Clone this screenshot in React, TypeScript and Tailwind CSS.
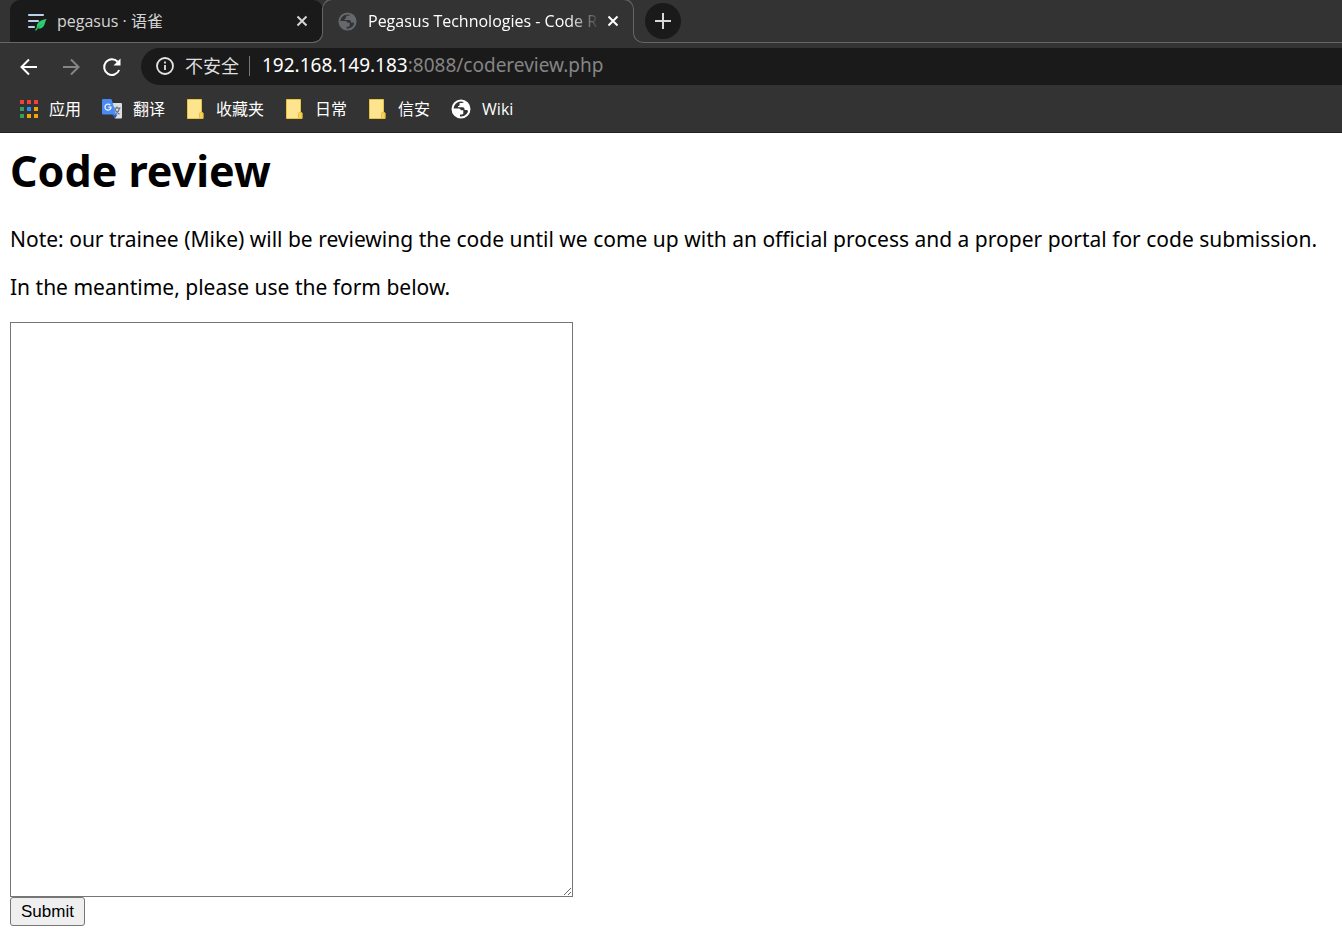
import type { ReactNode } from "react";

const uiFont = "font-['Open_Sans','Noto_Sans_CJK_SC',sans-serif]";

function GlobeIcon({ className }: { className: string }) {
  return (
    <svg viewBox="0 0 20 20" className={className} aria-hidden="true">
      <circle cx="10" cy="10" r="8.500" fill="none" stroke="currentColor" strokeWidth="2" />
      <path
        d="M1.500 9.500h5.500c1.700 0 2.600.6 3 1.800h2.300v2.700c0 1-.7 1.600-1.800 1.600H9v2.900A8.700 8.700 0 0 1 1.500 9.500z"
        fill="currentColor"
      />
      <path
        d="M13 1.800c0 1.400-.8 2.200-2.200 2.200H8.600v1.500c0 1-.6 1.600-1.600 1.600v1.200h4.600c1.200 0 1.900.7 1.900 1.800v.9h1.800c1 0 1.500.5 1.500 1.400h1.300A8.700 8.700 0 0 0 13 1.800z"
        fill="currentColor"
      />
    </svg>
  );
}

function NoteLeafIcon() {
  return (
    <svg viewBox="0 0 20 20" className="size-5 shrink-0" aria-hidden="true">
      <path d="M2 4h14M2 10h9M2 16h5" stroke="#b9cfee" strokeWidth="2.200" strokeLinecap="round" />
      <path d="M19.800 8c-3.800.2-7.900 2-9.400 5-.8 1.500-.6 2.600-.5 3.300L8 19.300l1 .5 2-2.300c2.800.3 4.900-.7 6.200-3.300.9-1.900 1-4.200 2.600-6.200z" fill="#2ecc71" />
      <path d="M9.700 18.200l4.300-4.700" stroke="#159b4c" strokeWidth=".8" />
    </svg>
  );
}

function CloseIcon() {
  return (
    <svg viewBox="0 0 12 12" className="size-3" aria-hidden="true">
      <path d="M1.500 1.500l9 9M10.500 1.500l-9 9" stroke="currentColor" strokeWidth="2" />
    </svg>
  );
}

function ArrowIcon({ className }: { className: string }) {
  return (
    <svg viewBox="0 0 18 18" className={className} aria-hidden="true">
      <path d="M17 9H2M9 1.500L1.500 9 9 16.500" fill="none" stroke="currentColor" strokeWidth="2" />
    </svg>
  );
}

function ReloadIcon() {
  return (
    <svg viewBox="0 0 20 20" className="size-5" aria-hidden="true">
      <path d="M15.700 4.800A7.800 7.800 0 1 0 17.200 13" fill="none" stroke="currentColor" strokeWidth="2" />
      <path d="M18.500 1.500v7H11.500z" fill="currentColor" />
    </svg>
  );
}

function AppsIcon() {
  const colors = ["#f2403a", "#f2403a", "#f2403a", "#34a05a", "#2b8df0", "#f5a30b", "#34a05a", "#f5a30b", "#f5a30b"];
  return (
    <svg viewBox="0 0 18 18" className="size-[18px]" aria-hidden="true">
      {colors.map((c, i) => (
        <rect key={i} x={(i % 3) * 7} y={Math.floor(i / 3) * 7} width="4" height="4" fill={c} />
      ))}
    </svg>
  );
}

function TranslateIcon() {
  return (
    <svg viewBox="0 0 20 20" className="size-5" aria-hidden="true">
      <path d="M8 4h11a1 1 0 0 1 1 1v13.500a1 1 0 0 1-1 1h-6z" fill="#dcdfe3" />
      <path d="M11.500 9.200h7M15 7.500v1.700M17.500 9.500c-.6 2.600-2.300 4.600-4.500 6M12.800 10c.7 2.300 2.400 4 4.700 5.200" fill="none" stroke="#6b7480" strokeWidth="1.200" />
      <path d="M10 15.500h5.500L13 19.500z" fill="#3059b5" />
      <path d="M1 0h7.800a1 1 0 0 1 1 .7L14 15.500H1a1 1 0 0 1-1-1V1a1 1 0 0 1 1-1z" fill="#4a8af4" />
      <path d="M8.300 6.200A3 3 0 1 0 9 8.200H6.300" fill="none" stroke="#eef4ff" strokeWidth="1.300" />
    </svg>
  );
}

function FolderIcon() {
  return (
    <svg viewBox="0 0 19 20" className="h-5 w-[19px]" aria-hidden="true">
      <path d="M1.500.500h14v13l1.500.500v5.500H1.500z" fill="#ffe48f" stroke="#e8c33c" />
      <path d="M13.500 19.500V14.500q0-1 1-1h1.500q1 0 1 1v5z" fill="#f6d25c" stroke="#e0b932" strokeWidth=".8" />
    </svg>
  );
}

function Bookmark({ icon, label }: { icon: ReactNode; label: string }) {
  return (
    <a href="#" className="flex items-center gap-[11px]">
      {icon}
      <span>{label}</span>
    </a>
  );
}

function TabStrip() {
  return (
    <div className="flex h-[43px]" role="tablist">
      <div className="w-[10px] shrink-0 border-b border-[#666666]" />
      <div
        role="tab"
        aria-selected="false"
        className="relative flex w-[313px] shrink-0 items-center rounded-t-[10px] rounded-br-[10px] border-b border-[#666666] bg-[#1a1a1a] pr-[15px] pl-[17px] text-[#d5d5d5] after:absolute after:right-0 after:-bottom-px after:h-[34px] after:w-[11px] after:rounded-br-[10px] after:border-r after:border-b after:border-[#666666]"
      >
        <NoteLeafIcon />
        <span className="ml-[10px] flex-1 truncate">pegasus · 语雀</span>
        <button type="button" aria-label="Close pegasus tab" className="relative z-10">
          <CloseIcon />
        </button>
      </div>
      <div
        role="tab"
        aria-selected="true"
        className="relative -ml-px flex w-[312px] shrink-0 items-center pr-[15px] pb-px pl-4 text-white before:absolute before:-top-px before:left-0 before:h-[11px] before:w-[10px] before:rounded-tl-[10px] before:border-t before:border-l before:border-[#666666] after:absolute after:-top-px after:right-0 after:h-[11px] after:w-[10px] after:rounded-tr-[10px] after:border-t after:border-r after:border-[#666666]"
      >
        <GlobeIcon className="size-[19px] shrink-0 text-[#65696d]" />
        <span className="ml-[11px] flex-1 overflow-hidden whitespace-nowrap [mask-image:linear-gradient(to_right,black_200px,transparent_232px)]">
          Pegasus Technologies - Code R
        </span>
        <button type="button" aria-label="Close Pegasus Technologies tab" className="ml-2">
          <CloseIcon />
        </button>
      </div>
      <div className="relative -ml-px flex flex-1 items-center pb-px pl-3 after:absolute after:bottom-0 after:left-0 after:h-[33px] after:w-full after:rounded-bl-[10px] after:border-b after:border-l after:border-[#666666]">
        <button
          type="button"
          aria-label="New tab"
          className="relative z-10 flex size-9 items-center justify-center rounded-full bg-[#1a1a1a] text-[#d8d8d8]"
        >
          <svg viewBox="0 0 16 16" className="size-4" aria-hidden="true">
            <path d="M8 0v16M0 8h16" stroke="currentColor" strokeWidth="2" />
          </svg>
        </button>
      </div>
    </div>
  );
}

function Toolbar() {
  return (
    <div className="flex items-center pt-[5px] pl-5">
      <button type="button" aria-label="Back" className="text-white">
        <ArrowIcon className="size-[18px]" />
      </button>
      <button type="button" aria-label="Forward" className="ml-6 text-[#858585]">
        <ArrowIcon className="size-[18px] rotate-180" />
      </button>
      <button type="button" aria-label="Reload" className="ml-[22px] text-white">
        <ReloadIcon />
      </button>
      <div className="ml-[19px] flex h-[37px] flex-1 items-center rounded-l-full bg-[#1a1a1a] pb-px pl-[15px] text-lg">
        <svg viewBox="0 0 18 18" className="size-[18px]" aria-hidden="true">
          <circle cx="9" cy="9" r="8" fill="none" stroke="#e4e4e4" strokeWidth="1.800" />
          <path d="M9 8v5M9 4.500v2" stroke="#e4e4e4" strokeWidth="1.800" />
        </svg>
        <span className="ml-[11px] text-[#dedede]">不安全</span>
        <span className="mr-3 ml-[10px] h-5 w-px bg-[#777777]" />
        <span className="font-['Noto_Sans',sans-serif] text-[19px] text-[#858585]">
          <span className="text-white">192.168.149.183</span>:8088/codereview.php
        </span>
      </div>
    </div>
  );
}

export default function App() {
  return (
    <div className="min-h-screen overflow-x-hidden bg-white text-black">
      <header className={`${uiFont} border-b border-[#252223] bg-[#333333] text-base`}>
        <TabStrip />
        <Toolbar />
        <nav aria-label="Bookmarks" className="flex h-[47px] items-center gap-[21px] pl-5 text-white">
          <Bookmark icon={<AppsIcon />} label="应用" />
          <Bookmark icon={<TranslateIcon />} label="翻译" />
          <Bookmark icon={<FolderIcon />} label="收藏夹" />
          <Bookmark icon={<FolderIcon />} label="日常" />
          <Bookmark icon={<FolderIcon />} label="信安" />
          <Bookmark icon={<GlobeIcon className="size-5 text-white" />} label="Wiki" />
        </nav>
      </header>
      <main className="px-[10px] pt-2 pb-[10px] font-['Noto_Sans',sans-serif] text-[21px] leading-8">
        <h1 className="text-[43px] leading-[60px] font-bold">Code review</h1>
        <p className="mt-[22px] whitespace-nowrap">
          Note: our trainee (Mike) will be reviewing the code until we come up with an official process and a proper portal for code submission.
        </p>
        <p className="mt-4">In the meantime, please use the form below.</p>
        <form className="mt-[19px] flex flex-col items-start" onSubmit={(e) => e.preventDefault()}>
          <textarea aria-label="Code" className="h-[575px] w-[563px] resize border border-[#767676] bg-white p-1 text-base outline-none" />
          <button
            type="submit"
            className="h-[29px] rounded-[3px] border border-[#767676] bg-[#efefef] px-[10px] font-['Liberation_Sans',sans-serif] text-[17px] leading-6"
          >
            Submit
          </button>
        </form>
      </main>
    </div>
  );
}
